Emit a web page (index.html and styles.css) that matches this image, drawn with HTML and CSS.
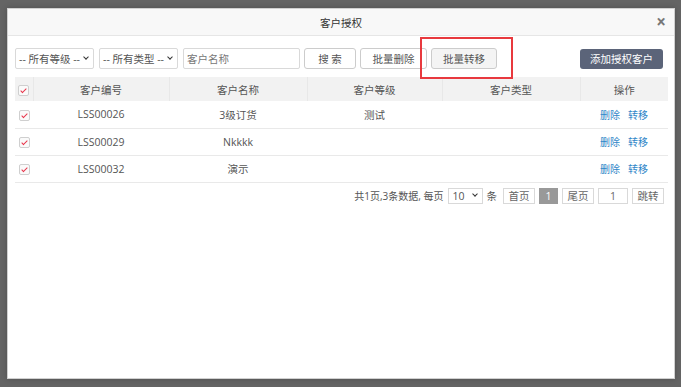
FILE: index.html
```html
<!DOCTYPE html>
<html lang="zh-CN">
<head>
<meta charset="UTF-8" />
<title>客户授权</title>
<link rel="stylesheet" href="styles.css">
</head>
<body>

  <!-- Modal -->
  <div class="modal">
    <div class="modal-header">
      <span class="modal-title">客户授权</span>
      <span class="modal-close">&times;</span>
    </div>

    <div class="modal-body">
      <div class="toolbar">
        <div class="filters">
          <div class="select"><span>-- 所有等级 --</span><i class="caret"></i></div>
          <div class="select"><span>-- 所有类型 --</span><i class="caret"></i></div>
          <div class="input">客户名称</div>
          <button class="btn btn-search">搜 索</button>
          <button class="btn btn-del">批量删除</button>
          <div class="highlight">
            <button class="btn btn-move">批量转移</button>
          </div>
        </div>
        <button class="btn-primary">添加授权客户</button>
      </div>

      <table class="grid">
        <thead>
          <tr>
            <th class="col-check"><span class="check"></span></th>
            <th class="col-code">客户编号</th>
            <th class="col-name">客户名称</th>
            <th class="col-level">客户等级</th>
            <th class="col-type">客户类型</th>
            <th class="col-op">操作</th>
          </tr>
        </thead>
        <tbody>
          <tr>
            <td><span class="check"></span></td>
            <td>LSS00026</td>
            <td>3级订货</td>
            <td>测试</td>
            <td></td>
            <td><a>删除</a><a>转移</a></td>
          </tr>
          <tr>
            <td><span class="check"></span></td>
            <td>LSS00029</td>
            <td>Nkkkk</td>
            <td></td>
            <td></td>
            <td><a>删除</a><a>转移</a></td>
          </tr>
          <tr>
            <td><span class="check"></span></td>
            <td>LSS00032</td>
            <td>演示</td>
            <td></td>
            <td></td>
            <td><a>删除</a><a>转移</a></td>
          </tr>
        </tbody>
      </table>

      <div class="pager">
        <span class="pager-info">共1页,3条数据, 每页</span>
        <div class="page-size"><span>10</span><i class="caret"></i></div>
        <span class="pager-unit">条</span>
        <span class="page-btn">首页</span>
        <span class="page-btn active">1</span>
        <span class="page-btn">尾页</span>
        <span class="page-input">1</span>
        <span class="page-btn">跳转</span>
      </div>
    </div>
  </div>

</body>
</html>
```

FILE: styles.css
```css
:root {
  --texto: #555;
  --borda: #d9d9d9;
  --azul: #2f86c8;
  --vermelho: #e8344a;
}

* {
  margin: 0;
  padding: 0;
  box-sizing: border-box;
  font-family: 'Open Sans', 'Noto Sans CJK SC', sans-serif;
}

body {
  background-color: #646464;
  color: var(--texto);
  font-size: 10.5px;
  padding: 8px 6px 8px 7px;
}

/* Modal */
.modal {
  width: 668px;
  height: 371px;
  background: #fff;
  border: 1px solid #d0d0d0;
  box-shadow: 0 0 6px rgba(0,0,0,0.2);
}

.modal-header {
  height: 27px;
  background: #f8f8f8;
  border-bottom: 1px solid #e6e6e6;
  display: flex;
  align-items: center;
  justify-content: center;
  position: relative;
}

.modal-title {
  color: #333;
  font-size: 10.5px;
}

.modal-close {
  position: absolute;
  right: 8px;
  top: 3px;
  font-size: 17px;
  font-weight: 700;
  color: #777;
  line-height: 20px;
}

.modal-body {
  padding: 12px 6px 0 7px;
}

/* Toolbar */
.toolbar {
  display: flex;
  justify-content: space-between;
  align-items: center;
  height: 21px;
  padding-right: 5px;
}

.filters {
  display: flex;
  align-items: center;
}

.select,
.input {
  height: 21px;
  border: 1px solid var(--borda);
  border-radius: 2px;
  display: flex;
  align-items: center;
  justify-content: space-between;
  padding: 0 3px 0 3px;
  color: #555;
  margin-right: 5px;
  white-space: nowrap;
  overflow: hidden;
}

.select { width: 79px; }
.input { width: 117px; color: #777; margin-right: 4px; }

.caret {
  flex: none;
  width: 4px;
  height: 4px;
  border-right: 1.5px solid #333;
  border-bottom: 1.5px solid #333;
  transform: rotate(45deg);
  margin-top: -3px;
  margin-right: 2px;
}

.btn {
  height: 21px;
  background: #fff;
  border: 1px solid #ccc;
  border-radius: 3px;
  color: #555;
  font-size: 10.5px;
  cursor: pointer;
}

.btn-search { width: 52px; }
.btn-del { width: 67px; margin-left: 4px; }

.highlight {
  position: relative;
  margin-left: 4px;
  width: 66px;
  height: 21px;
}

.highlight::before {
  content: '';
  position: absolute;
  left: -11px;
  top: -11px;
  width: 89px;
  height: 38px;
  border: 2px solid #e8393e;
}

.btn-move {
  width: 66px;
  background: #f4f4f4;
}

.btn-primary {
  width: 83px;
  height: 20px;
  background: #5b6479;
  color: #fff;
  border: none;
  border-radius: 3px;
  font-size: 10.5px;
}

/* Table */
.grid {
  width: 653px;
  margin-top: 8px;
  border-collapse: collapse;
  table-layout: fixed;
}

.grid th {
  height: 24px;
  background: #f2f2f2;
  font-weight: 400;
  color: #555;
  border-left: 1px solid #e8e8e8;
}

.grid th:first-child { border-left: none; }

.grid td {
  height: 27px;
  text-align: center;
  border-bottom: 1px solid #e9e9e9;
  color: #555;
}

.col-check { width: 18px; }
.col-code { width: 136px; }
.col-name { width: 138px; }
.col-level { width: 135px; }
.col-type { width: 138px; }
.col-op { width: 88px; }

.check {
  display: inline-block;
  width: 11px;
  height: 11px;
  border: 1px solid #cfcfcf;
  border-radius: 2px;
  background: #fafafa;
  position: relative;
  vertical-align: middle;
}

.check::after {
  content: '';
  box-sizing: content-box;
  position: absolute;
  left: 3px;
  top: 1px;
  width: 2px;
  height: 5px;
  border-right: 1.5px solid var(--vermelho);
  border-bottom: 1.5px solid var(--vermelho);
  transform: rotate(45deg);
}

.grid a {
  color: var(--azul);
  margin: 0 4px;
  font-size: 10px;
}

/* Pagination */
.pager {
  display: flex;
  justify-content: flex-end;
  align-items: center;
  gap: 4px;
  margin-top: 5px;
  padding-right: 4px;
  color: #555;
}

.pager-info { font-size: 10px; }

.page-size {
  width: 35px;
  height: 16px;
  border: 1px solid var(--borda);
  display: flex;
  align-items: center;
  justify-content: space-between;
  padding: 0 3px 0 4px;
}

.pager-unit { margin-right: 2px; }

.page-btn,
.page-input {
  width: 32px;
  height: 16px;
  border: 1px solid var(--borda);
  display: flex;
  align-items: center;
  justify-content: center;
  color: #666;
}

.page-btn.active {
  width: 19px;
  background: #999;
  border-color: #999;
  color: #fff;
}

.page-input { width: 30px; }
```
